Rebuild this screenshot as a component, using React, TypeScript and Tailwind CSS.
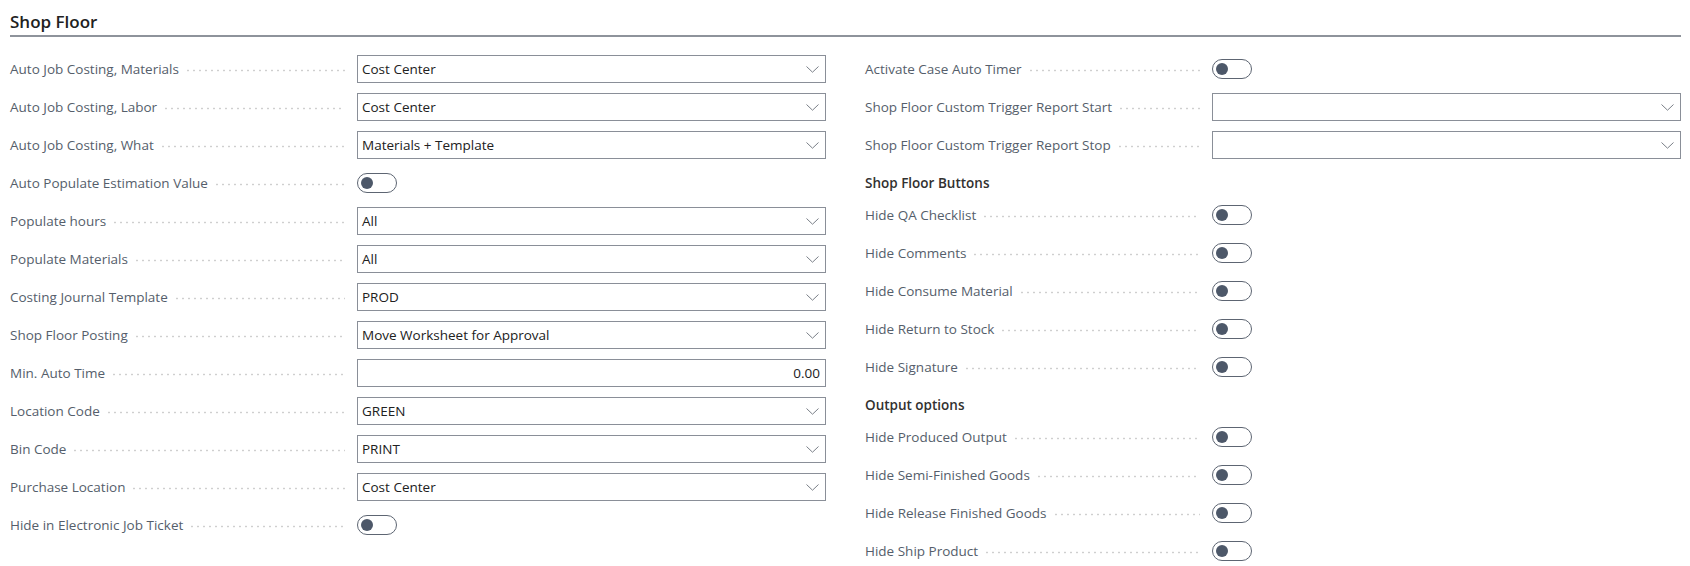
type Field =
  | { kind: "select"; label: string; value: string }
  | { kind: "number"; label: string; value: string }
  | { kind: "toggle"; label: string }
  | { kind: "heading"; label: string };

const left: Field[] = [
  { kind: "select", label: "Auto Job Costing, Materials", value: "Cost Center" },
  { kind: "select", label: "Auto Job Costing, Labor", value: "Cost Center" },
  { kind: "select", label: "Auto Job Costing, What", value: "Materials + Template" },
  { kind: "toggle", label: "Auto Populate Estimation Value" },
  { kind: "select", label: "Populate hours", value: "All" },
  { kind: "select", label: "Populate Materials", value: "All" },
  { kind: "select", label: "Costing Journal Template", value: "PROD" },
  { kind: "select", label: "Shop Floor Posting", value: "Move Worksheet for Approval" },
  { kind: "number", label: "Min. Auto Time", value: "0.00" },
  { kind: "select", label: "Location Code", value: "GREEN" },
  { kind: "select", label: "Bin Code", value: "PRINT" },
  { kind: "select", label: "Purchase Location", value: "Cost Center" },
  { kind: "toggle", label: "Hide in Electronic Job Ticket" },
];

const right: Field[] = [
  { kind: "toggle", label: "Activate Case Auto Timer" },
  { kind: "select", label: "Shop Floor Custom Trigger Report Start", value: "" },
  { kind: "select", label: "Shop Floor Custom Trigger Report Stop", value: "" },
  { kind: "heading", label: "Shop Floor Buttons" },
  { kind: "toggle", label: "Hide QA Checklist" },
  { kind: "toggle", label: "Hide Comments" },
  { kind: "toggle", label: "Hide Consume Material" },
  { kind: "toggle", label: "Hide Return to Stock" },
  { kind: "toggle", label: "Hide Signature" },
  { kind: "heading", label: "Output options" },
  { kind: "toggle", label: "Hide Produced Output" },
  { kind: "toggle", label: "Hide Semi-Finished Goods" },
  { kind: "toggle", label: "Hide Release Finished Goods" },
  { kind: "toggle", label: "Hide Ship Product" },
];

function Chevron() {
  return (
    <svg width="13" height="7" viewBox="0 0 13 7" fill="none" className="shrink-0">
      <path d="M0.5 0.5 L6.5 6.2 L12.5 0.5" stroke="#7a7f87" strokeWidth="1" />
    </svg>
  );
}

function Toggle() {
  return (
    <div className="flex h-[20px] w-[40px] items-center rounded-full border border-[#5d6572] pl-[3px]">
      <div className="h-[12px] w-[12px] rounded-full bg-[#4d5869]" />
    </div>
  );
}

function Row({ field }: { field: Field }) {
  if (field.kind === "heading") {
    return (
      <div className="h-[32px] pt-[11px] text-[13.5px] leading-[16px] font-semibold text-[#323130]">
        {field.label}
      </div>
    );
  }
  return (
    <div className="flex h-[38px] items-center">
      <div className="flex w-[347px] items-center pr-[12px]">
        <span className="whitespace-nowrap text-[13.5px] text-[#555e6b]">{field.label}</span>
        <div className="ml-[6px] mt-[3px] h-[3px] flex-1 bg-[radial-gradient(circle,#cfcfcf_0.8px,transparent_1.2px)] bg-size-[6px_3px] bg-repeat-x" />
      </div>
      <div className="w-[469px]">
        {field.kind === "toggle" && <Toggle />}
        {field.kind === "select" && (
          <div className="flex h-[28px] items-center justify-between border border-[#8a8f98] pl-[4px] pr-[6px] text-[13.5px] text-[#212121]">
            <span>{field.value}</span>
            <Chevron />
          </div>
        )}
        {field.kind === "number" && (
          <div className="flex h-[28px] items-center justify-end border border-[#8a8f98] pr-[5px] text-[13.5px] text-[#212121]">
            {field.value}
          </div>
        )}
      </div>
    </div>
  );
}

export default function App() {
  return (
    <div className="h-[566px] overflow-hidden bg-white pl-[10px] pr-[9px] font-['Open_Sans',sans-serif]">
      <div className="border-b-2 border-[#8e939b] pt-[10px] pb-[1px]">
        <h1 className="text-[17px] leading-[24px] font-semibold text-[#212121]">Shop Floor</h1>
      </div>
      <div className="mt-[13px] grid grid-cols-2 gap-x-[39px]">
        <div>
          {left.map((f) => (
            <Row key={f.label} field={f} />
          ))}
        </div>
        <div>
          {right.map((f) => (
            <Row key={f.label} field={f} />
          ))}
        </div>
      </div>
    </div>
  );
}
